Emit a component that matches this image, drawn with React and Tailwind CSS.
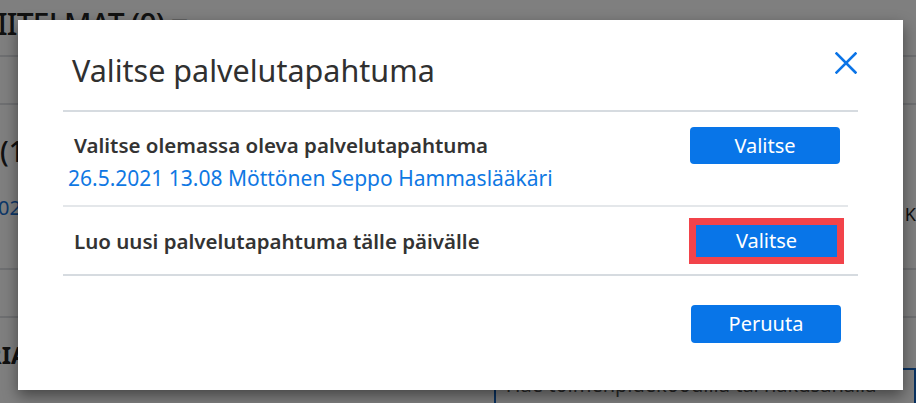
import React from "react";

export default function App() {
  const font = { fontFamily: '"Noto Sans", "Open Sans", sans-serif' };
  return (
    <div className="relative w-[916px] h-[403px] overflow-hidden bg-white" style={font}>
      {/* underlying page */}
      <div className="flex flex-col text-[#222]">
        <div className="h-[57px] border-b-2 border-[#dcdfe3] flex items-start">
          <div className="ml-[-3px] mt-[4px] text-[30px] font-medium tracking-tight leading-[40px] whitespace-nowrap">IITELMAT (0) ▾</div>
        </div>
        <div className="h-[48px] border-b-2 border-[#dcdfe3]"></div>
        <div className="h-[165px] border-b-2 border-[#dcdfe3] flex flex-col relative">
          <div className="mt-[28px] text-[28px] leading-[36px] font-medium">(1</div>
          <div className="mt-[25px] text-[20px] leading-[28px] text-[#1a6fd0] ml-[-2px]">02</div>
          <div className="absolute right-[-10px] top-[96px] text-[18px]">Ke</div>
        </div>
        <div className="h-[48px] border-b-2 border-[#dcdfe3]"></div>
        <div className="flex items-start">
          <div className="mt-[22px] ml-[-14px] text-[24px] font-bold leading-[30px]">RIA</div>
          <div className="ml-[466px] mt-[50px] w-[460px] h-[40px] border-2 border-[#1565c0] pl-[10px] text-[20px] text-[#555] leading-[30px] whitespace-nowrap">
            Hae toimenpidekoodilla tai hakusanalla
          </div>
        </div>
      </div>

      {/* overlay */}
      <div className="absolute inset-0 bg-black/50"></div>

      {/* modal */}
      <div className="absolute left-[18px] top-[20px] w-[885px] h-[370px] bg-white shadow-[0_6px_14px_rgba(0,0,0,0.45)] px-[45px] text-[#333]">
        <div className="h-[92px] border-b-2 border-[#d6dbe0] flex items-center justify-between pl-[9px] pr-[1px] pt-[10px]">
          <div className="text-[30.5px] leading-[38px] text-[#303030] whitespace-nowrap">Valitse palvelutapahtuma</div>
          <svg width="22" height="22" viewBox="0 0 22 22" className="mt-[-14px]">
            <path d="M1.5 1.5 L20.5 20.5 M20.5 1.5 L1.5 20.5" stroke="#0b74e7" strokeWidth="2.6" strokeLinecap="square" fill="none" />
          </svg>
        </div>

        <div className="h-[95px] mr-[10px] border-b-2 border-[#e4e7ea] flex items-start justify-between pr-[8px]">
          <div className="flex flex-col">
            <div className="mt-[19px] ml-[11px] text-[20.5px] leading-[28px] font-semibold text-[#333] whitespace-nowrap">
              Valitse olemassa oleva palvelutapahtuma
            </div>
            <div className="mt-[4px] ml-[5px] text-[21px] leading-[30px] text-[#0f78e3] whitespace-nowrap">
              26.5.2021 13.08 Möttönen Seppo Hammaslääkäri
            </div>
          </div>
          <button className="mt-[15px] w-[150px] h-[37px] rounded-[4px] bg-[#0875e8] text-white text-[20px] leading-[28px]">
            Valitse
          </button>
        </div>

        <div className="h-[69px] border-b-2 border-[#d6dbe0] flex items-center justify-between pr-[14px]">
          <div className="ml-[11px] text-[20.5px] leading-[28px] font-semibold text-[#333] whitespace-nowrap">
            Luo uusi palvelutapahtuma tälle päivälle
          </div>
          <div className="border-[7px] border-[#f2434a] mt-[1px]">
            <button className="block w-[141px] h-[32px] bg-[#0875e8] text-white text-[20px] leading-[28px]">
              Valitse
            </button>
          </div>
        </div>

        <div className="flex justify-end pr-[17px] pt-[29px]">
          <button className="w-[150px] h-[38px] rounded-[4px] bg-[#0875e8] text-white text-[20px] leading-[28px]">
            Peruuta
          </button>
        </div>
      </div>
    </div>
  );
}
